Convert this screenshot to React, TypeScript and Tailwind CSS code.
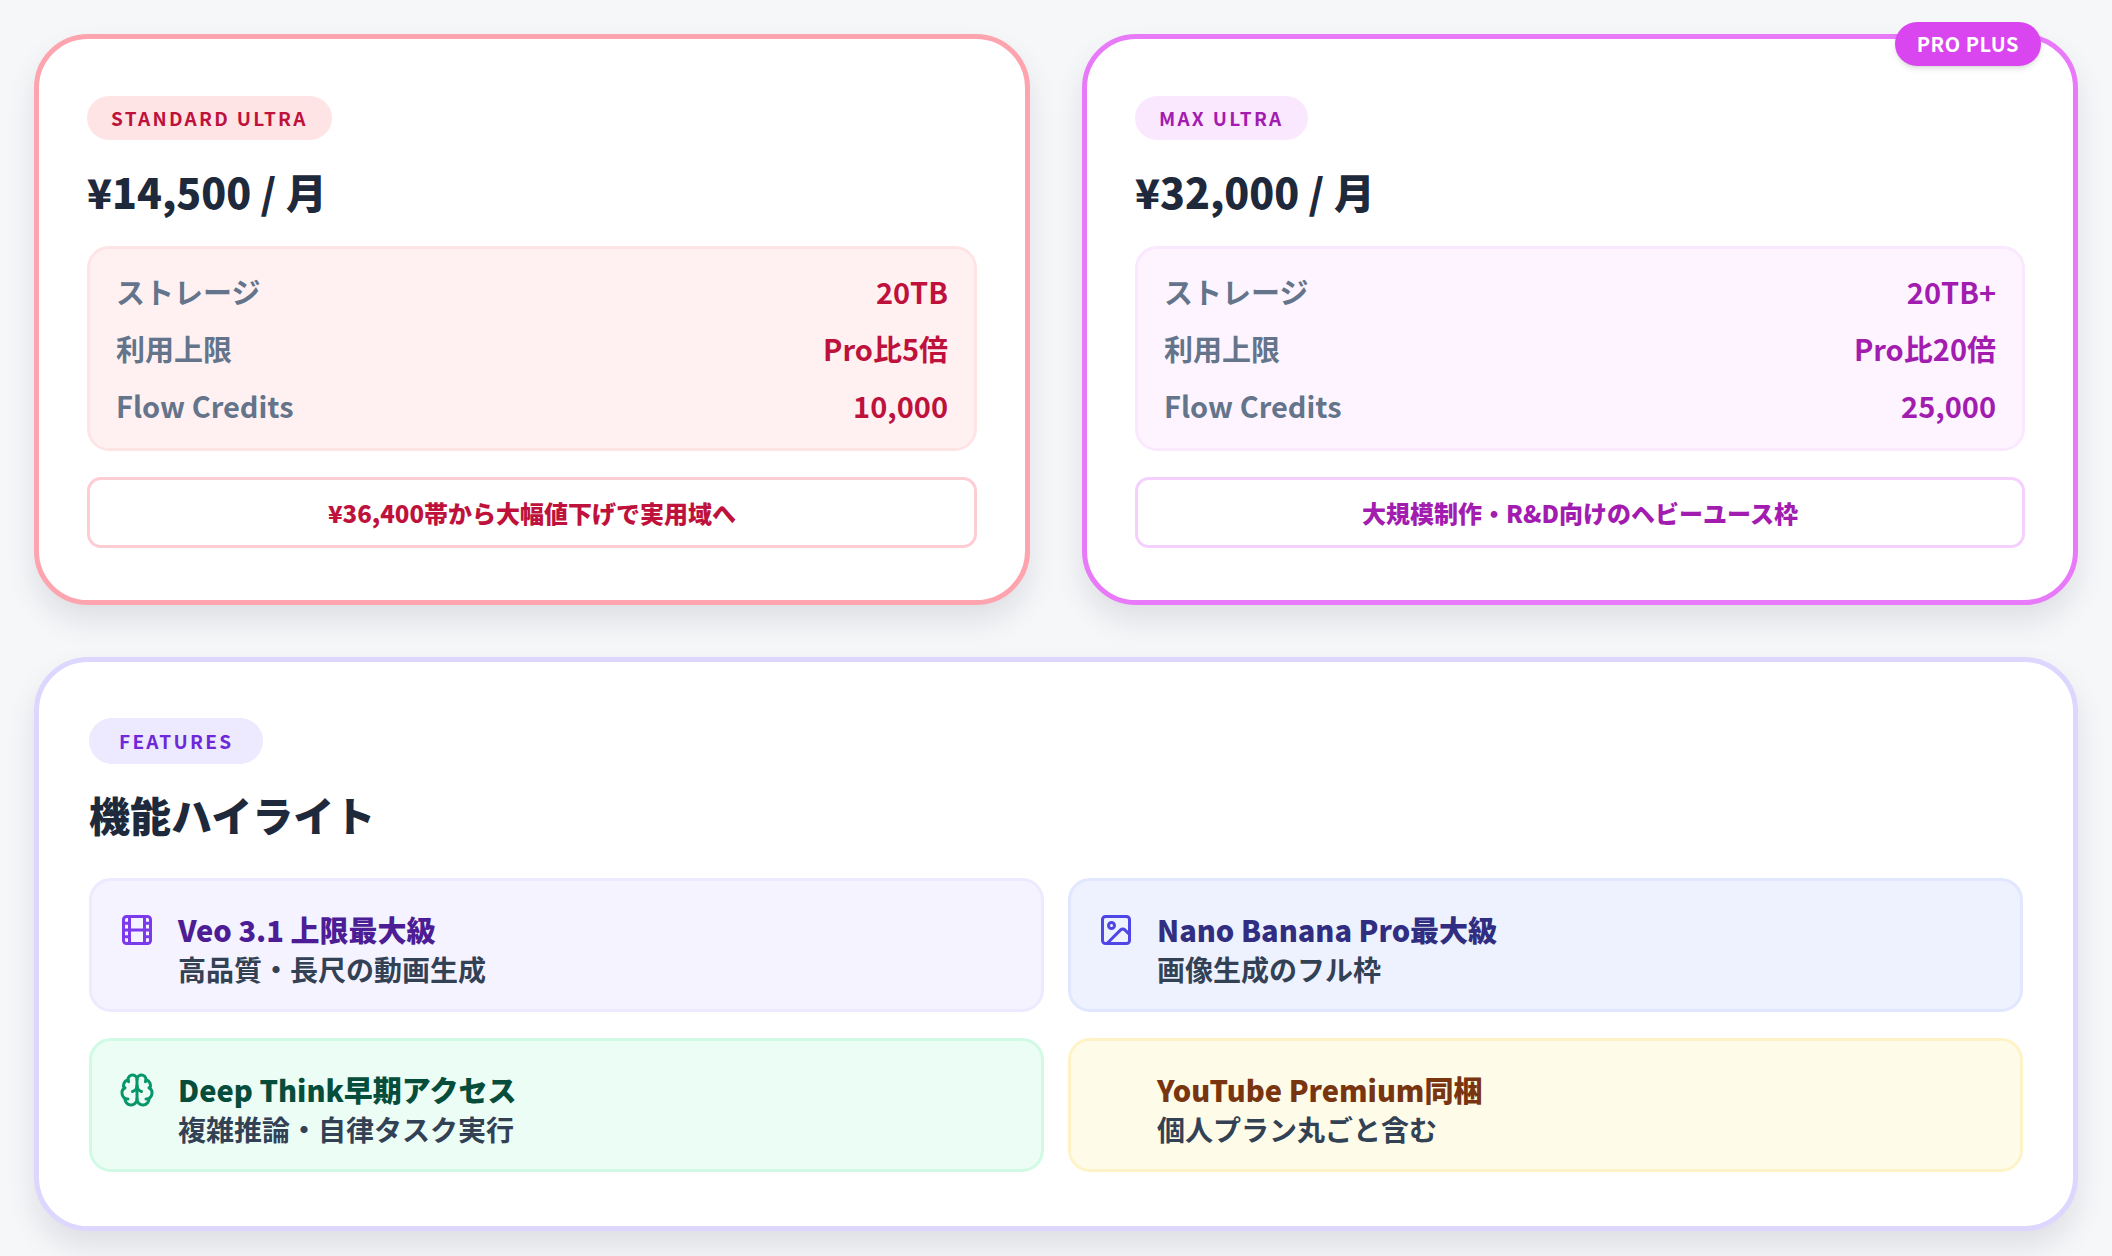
import React from 'react';
import { Film, Image, Brain } from 'lucide-react';

const font = { fontFamily: '"Noto Sans CJK JP", "Noto Sans", sans-serif' };

type Plan = {
  badge: string;
  price: string;
  rows: [string, string][];
  note: string;
  tag?: string;
  border: string;
  badgeCls: string;
  statCls: string;
  valueCls: string;
  noteCls: string;
};

const plans: Plan[] = [
  {
    badge: 'STANDARD ULTRA',
    price: '¥14,500 / 月',
    rows: [['ストレージ', '20TB'], ['利用上限', 'Pro比5倍'], ['Flow Credits', '10,000']],
    note: '¥36,400帯から大幅値下げで実用域へ',
    border: 'border-[#fda4af]',
    badgeCls: 'bg-[#ffe4e6] text-[#be123c]',
    statCls: 'bg-[#fff1f2] border-[#ffe4e6]',
    valueCls: 'text-[#be123c]',
    noteCls: 'border-[#fecdd3] text-[#be123c]',
  },
  {
    badge: 'MAX ULTRA',
    price: '¥32,000 / 月',
    rows: [['ストレージ', '20TB+'], ['利用上限', 'Pro比20倍'], ['Flow Credits', '25,000']],
    note: '大規模制作・R&D向けのヘビーユース枠',
    tag: 'PRO PLUS',
    border: 'border-[#e879f9]',
    badgeCls: 'bg-[#fae8ff] text-[#a21caf]',
    statCls: 'bg-[#fdf4ff] border-[#fae8ff]',
    valueCls: 'text-[#a21caf]',
    noteCls: 'border-[#f5d0fe] text-[#a21caf]',
  },
];

const features = [
  { icon: Film, title: 'Veo 3.1 上限最大級', sub: '高品質・長尺の動画生成', box: 'bg-[#f5f3ff] border-[#ede9fe]', title_: 'text-[#4c1d95]', ic: 'text-[#7c3aed]' },
  { icon: Image, title: 'Nano Banana Pro最大級', sub: '画像生成のフル枠', box: 'bg-[#eef2ff] border-[#e0e7ff]', title_: 'text-[#312e81]', ic: 'text-[#4f46e5]' },
  { icon: Brain, title: 'Deep Think早期アクセス', sub: '複雑推論・自律タスク実行', box: 'bg-[#ecfdf5] border-[#d1fae5]', title_: 'text-[#064e3b]', ic: 'text-[#059669]' },
  { icon: null, title: 'YouTube Premium同梱', sub: '個人プラン丸ごと含む', box: 'bg-[#fefce8] border-[#fef3c7]', title_: 'text-[#78350f]', ic: '' },
];

export default function App() {
  return (
    <div style={font} className="min-h-screen w-full bg-[#f6f7f9] p-[34px] flex flex-col gap-[52px]">
      <div className="grid grid-cols-2 gap-[52px]">
        {plans.map(p => (
          <div key={p.badge} className={`relative rounded-[54px] border-[5px] ${p.border} bg-white px-[48px] pt-[57px] pb-[52px] shadow-[0_16px_30px_rgba(15,23,42,0.10)]`}>
            {p.tag && (
              <div className="absolute right-[32px] -top-[17px] rounded-full bg-[#d946ef] px-[22px] h-[44px] flex items-center text-white text-[20px] font-bold tracking-wide shadow-md">
                {p.tag}
              </div>
            )}
            <div className={`inline-flex items-center h-[44px] px-[24px] rounded-full text-[19px] font-bold tracking-[0.12em] ${p.badgeCls}`}>
              {p.badge}
            </div>
            <div className="mt-[31px] text-[41px] font-black text-[#1e293b] leading-none">{p.price}</div>
            <div className={`mt-[34px] rounded-[22px] border-[3px] px-[26px] py-[14px] ${p.statCls}`}>
              {p.rows.map(([k, v]) => (
                <div key={k} className="flex justify-between items-center h-[57px] text-[29px] font-bold">
                  <span className="text-[#64748b]">{k}</span>
                  <span className={p.valueCls}>{v}</span>
                </div>
              ))}
            </div>
            <div className={`mt-[26px] h-[71px] rounded-[14px] border-[3px] bg-white flex items-center justify-center text-[24px] font-black ${p.noteCls}`}>
              {p.note}
            </div>
          </div>
        ))}
      </div>

      <div className="rounded-[54px] border-[5px] border-[#ddd6fe] bg-white px-[50px] pt-[56px] pb-[54px] shadow-[0_16px_30px_rgba(15,23,42,0.10)]">
        <div className="inline-flex items-center h-[46px] px-[30px] rounded-full bg-[#ede9fe] text-[#6d28d9] text-[19px] font-bold tracking-[0.12em]">
          FEATURES
        </div>
        <div className="mt-[30px] text-[41px] font-black text-[#1e293b] leading-none">機能ハイライト</div>
        <div className="mt-[43px] grid grid-cols-2 gap-x-[24px] gap-y-[26px]">
          {features.map(f => {
            const Icon = f.icon;
            return (
              <div key={f.title} className={`h-[134px] rounded-[22px] border-[3px] ${f.box} flex items-start px-[27px] pt-[28px]`}>
                <div className={`w-[36px] h-[36px] mt-[3px] shrink-0 ${f.ic}`}>
                  {Icon && <Icon size={36} strokeWidth={2} />}
                </div>
                <div className="ml-[23px]">
                  <div className={`text-[29px] font-black leading-[40px] ${f.title_}`}>{f.title}</div>
                  <div className="text-[28px] font-bold leading-[40px] text-[#334155]">{f.sub}</div>
                </div>
              </div>
            );
          })}
        </div>
      </div>
    </div>
  );
}
